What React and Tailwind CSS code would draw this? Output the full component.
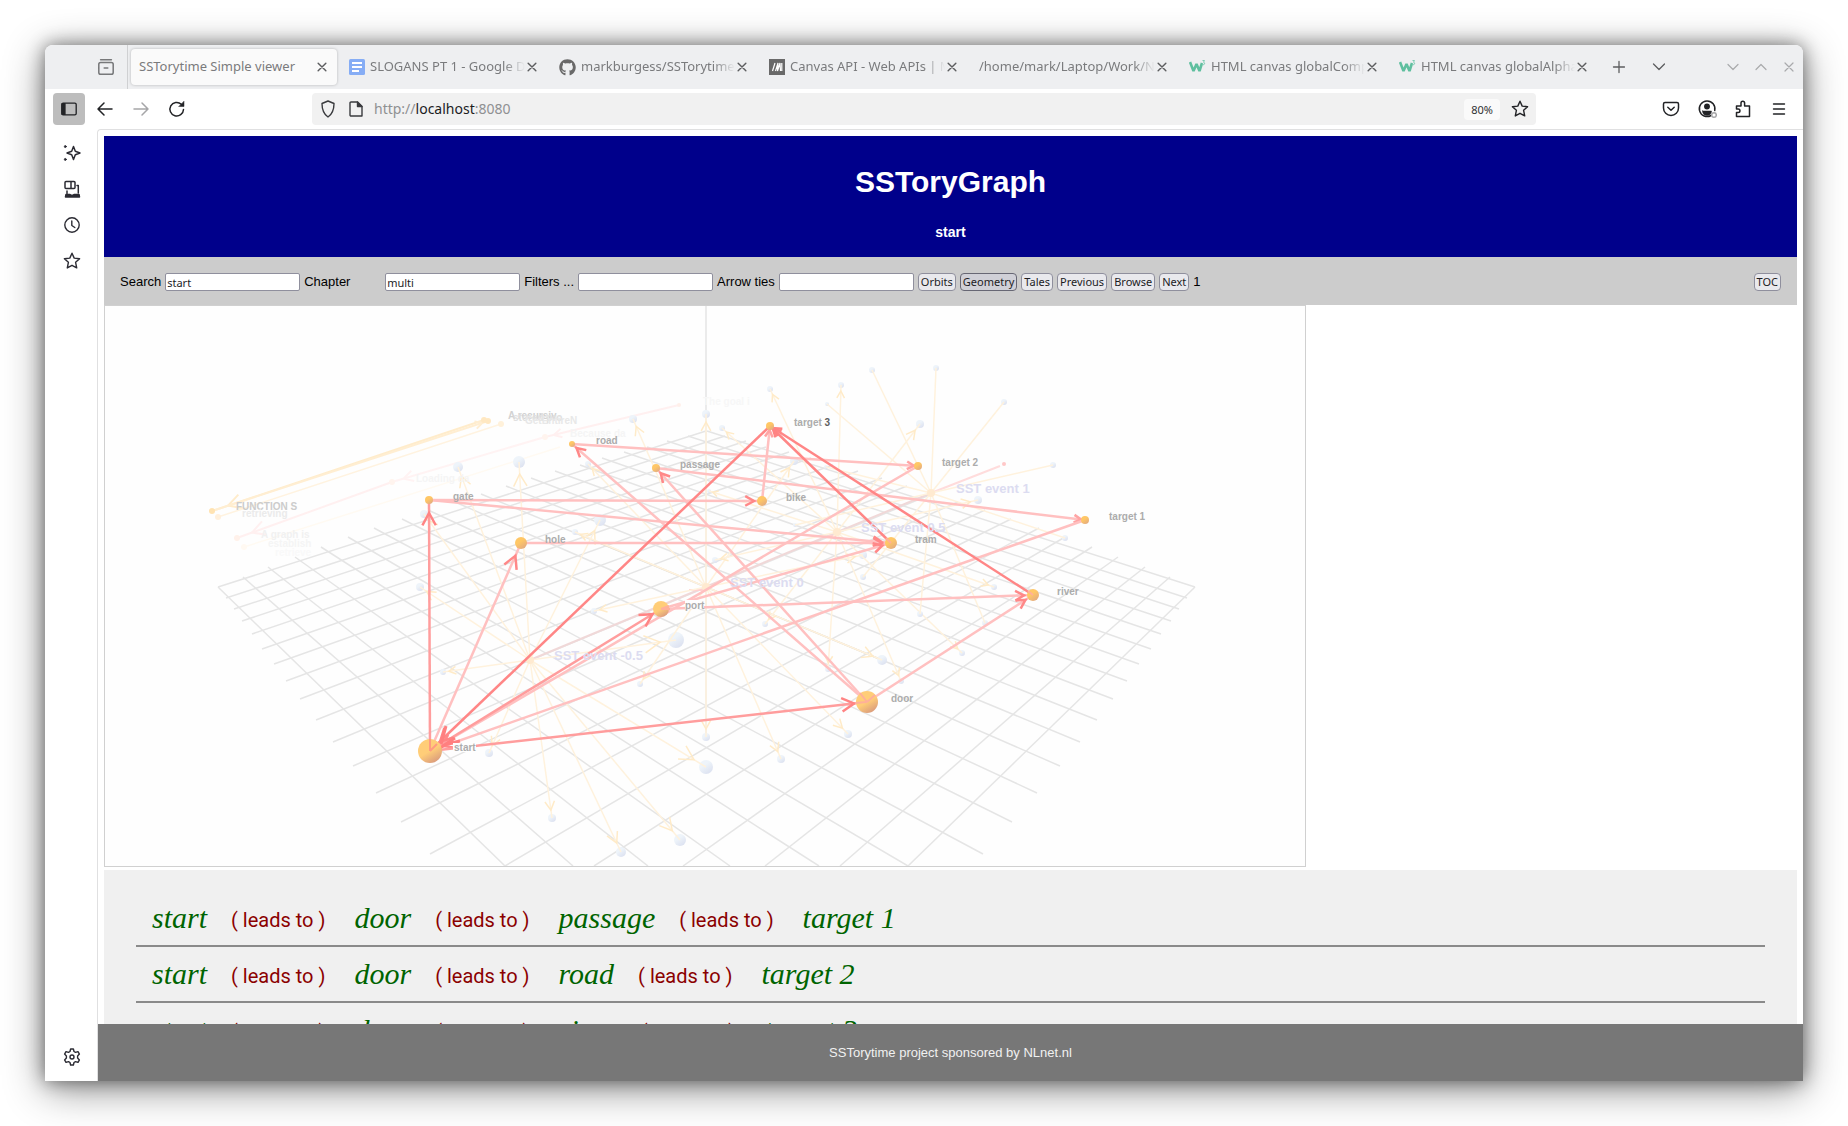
import React from "react";
import { FaGithub } from "react-icons/fa";

/* ---------- graph data ---------- */

const NODES = {
  start: [430, 751, 12],
  door: [867, 702, 11],
  port: [661, 609, 8],
  river: [1033, 595, 6],
  tram: [891, 543, 6],
  hole: [521, 543, 6],
  bike: [762, 501, 5],
  gate: [429, 500, 4],
  passage: [656, 468, 4],
  "target 1": [1085, 520, 4],
  "target 2": [918, 466, 4],
  road: [572, 444, 3],
  "target 3": [770, 426, 4],
};

const STEPS = [
  ["start", "hole"],
  ["gate", "bike"],
  ["gate", "tram"],
  ["hole", "tram"],
  ["port", "tram"],
  ["port", "river"],
  ["door", "passage"],
  ["door", "road"],
  ["door", "river"],
  ["passage", "target 1"],
  ["road", "target 2"],
  ["bike", "target 3"],
  ["target 2", "start"],
  ["target 1", "start"],
];

const STRONG_STEPS = [
  ["start", "gate"],
  ["start", "port"],
  ["start", "door"],
  ["tram", "target 3"],
  ["river", "target 3"],
  ["target 3", "start"],
];

const HUBS = [
  {
    label: "SST event -0.5",
    at: [530, 660],
    text: [554, 660],
    leaves: [
      [458, 467, 5], [519, 462, 6], [424, 514, 4], [600, 520, 6], [420, 587, 4], [443, 672, 3],
      [489, 753, 4], [552, 818, 4], [621, 852, 5], [680, 840, 6], [706, 767, 7], [676, 640, 8],
    ],
  },
  {
    label: "SST event 0",
    at: [706, 587],
    text: [730, 587],
    leaves: [
      [706, 414, 4], [633, 419, 4], [588, 464, 3], [575, 532, 3], [594, 611, 3], [640, 684, 3],
      [706, 737, 4], [781, 759, 4], [848, 734, 4], [882, 660, 5], [794, 461, 4], [863, 555, 4],
    ],
  },
  {
    label: "SST event 0.5",
    at: [837, 532],
    text: [861, 532],
    leaves: [
      [722, 428, 3], [770, 389, 3], [841, 385, 3], [920, 424, 4], [978, 500, 4], [994, 587, 3],
      [962, 653, 3], [901, 681, 3], [828, 669, 3], [765, 624, 3], [715, 560, 3], [709, 491, 2],
    ],
  },
  {
    label: "SST event 1",
    at: [931, 493],
    text: [956, 493],
    plain: true,
    leaves: [
      [827, 404, 2], [872, 370, 3], [936, 368, 3], [1004, 402, 3], [1053, 465, 3], [1065, 538, 3],
      [985, 623, 3], [920, 614, 3], [863, 577, 3], [795, 525, 2], [826, 467, 2],
    ],
  },
];

const UPPER = [
  [218, 587], [243, 577], [268, 567], [295, 557], [321, 547], [348, 537], [374, 528],
  [402, 519], [428, 510], [455, 502], [481, 494], [506, 486], [531, 478], [555, 471],
  [580, 465], [602, 458], [624, 452], [647, 447], [667, 441], [688, 436], [707, 431],
];
const LOWER = [
  [218, 587], [226, 598], [234, 609], [242, 621], [252, 634], [262, 649], [274, 664],
  [286, 681], [300, 699], [316, 720], [333, 742], [353, 766], [376, 793], [401, 822], [430, 854],
  [505, 866], [594, 866], [683, 866], [765, 866], [840, 866], [908, 866],
];
/* the floor is symmetric about the vertical axis: x and MIRROR - x are twins */
const MIRROR = 1413;

const FAINT_TEXT = [
  ["A recursiv", 508, 419, "#d2d2d2"],
  ["stored pro", 513, 421, "#e0e0e0"],
  ["GetEntireN", 525, 424, "#e8e8e8"],
  ["Because da", 570, 437, "#f5f5f5"],
  ["Loading da", 416, 482, "#f5f5f5"],
  ["FUNCTION S", 236, 510, "#cccccc"],
  ["retrieving", 242, 517, "#ebebeb"],
  ["A graph is", 261, 538, "#f1f1f1"],
  ["establish", 268, 547, "#f5f5f5"],
  ["retrieve", 275, 556, "#f9f9f9"],
  ["The goal i", 703, 405, "#f7f7f7"],
];

function headPath(from, to, back, len) {
  const a = Math.atan2(to[1] - from[1], to[0] - from[0]);
  const tx = to[0] - back * Math.cos(a);
  const ty = to[1] - back * Math.sin(a);
  const wing = (d) => `${tx - len * Math.cos(a + d)} ${ty - len * Math.sin(a + d)}`;
  return `M${wing(0.5)}L${tx} ${ty}L${wing(-0.5)}`;
}

function Arrow({ from, to, back, len, color, width, headColor }) {
  return (
    <g fill="none" strokeWidth={width}>
      <path d={`M${from[0]} ${from[1]}L${to[0]} ${to[1]}`} stroke={color} />
      {len > 0 && <path d={headPath(from, to, back, len)} stroke={headColor || color} />}
    </g>
  );
}

function Graph() {
  return (
    <svg viewBox="105 306 1200 560" className="block w-full" role="img" aria-label="Story graph">
      <defs>
        <linearGradient id="ball" x1="0.3" y1="0.1" x2="0.8" y2="0.95">
          <stop offset="0.45" stopColor="#ffcd78" />
          <stop offset="1" stopColor="#d99a7c" />
        </linearGradient>
        <linearGradient id="smallball" x1="0.2" y1="0.1" x2="0.8" y2="0.95">
          <stop offset="0.35" stopColor="#ffc766" />
          <stop offset="1" stopColor="#e3ab80" />
        </linearGradient>
        <linearGradient id="leaf" x1="0.2" y1="0.1" x2="0.8" y2="0.95">
          <stop offset="0.3" stopColor="#eef4fa" />
          <stop offset="1" stopColor="#dce1f0" />
        </linearGradient>
      </defs>

      {/* floor grid */}
      <g stroke="#e5e5e5" strokeWidth="1.5">
        {LOWER.map(([x, y], k) => {
          const [ux, uy] = UPPER[20 - k];
          return (
            <g key={k}>
              <line x1={x} y1={y} x2={MIRROR - ux} y2={uy} />
              <line x1={MIRROR - x} y1={y} x2={ux} y2={uy} />
            </g>
          );
        })}
      </g>

      {/* axes */}
      <line x1="706" y1="306" x2="706" y2="737" stroke="#e4e4e4" strokeWidth="1.5" />
      <line x1="600" y1="543" x2="882" y2="660" stroke="#e2dcd0" strokeWidth="1.5" />
      <path d="M530 660L931 493" stroke="#f0d8d8" strokeWidth="2" fill="none" />
      <path d="M931 493L1000 466" stroke="#ffdcdc" strokeWidth="2" fill="none" />
      <path d="M689 590H705M828 536H837" stroke="#ffd0d0" strokeWidth="2" fill="none" />

      {/* background clusters */}
      <Arrow from={[484, 420]} to={[212, 511]} back={17} len={15} color="#ffeccb" width="2" />
      <Arrow from={[212, 511]} to={[488, 421]} back={6} len={8} color="#ffeed2" width="2" />
      <line x1="218" y1="517" x2="501" y2="424" stroke="#fff3e0" strokeWidth="1.5" />
      <line x1="244" y1="547" x2="560" y2="447" stroke="#fffaf2" strokeWidth="1.5" />
      <Arrow from={[392, 482]} to={[237, 538]} back={16} len={15} color="#fff0f0" width="2" />
      <Arrow from={[545, 437]} to={[392, 482]} back={12} len={11} color="#fff3f3" width="2" />
      <Arrow from={[679, 405]} to={[545, 437]} back={9} len={9} color="#fff0f0" width="2" />
      <circle cx="212" cy="511" r="3" fill="#ffe3b2" />
      <circle cx="218" cy="517" r="3" fill="#fff0dc" />
      <circle cx="484" cy="420" r="3" fill="#ffe8c2" />
      <circle cx="488" cy="421" r="3" fill="#ffe8c2" />
      <circle cx="501" cy="424" r="3" fill="#fff1da" />
      <circle cx="237" cy="538" r="3" fill="#fff1ea" />
      <circle cx="244" cy="547" r="3" fill="#fff9f2" />
      <circle cx="392" cy="482" r="3" fill="#fff4ee" />
      <circle cx="545" cy="437" r="3" fill="#fff4ee" />
      <circle cx="679" cy="405" r="2" fill="#fff0ea" />

      {/* event hubs with their spokes */}
      {HUBS.map((h) => (
        <g key={h.label}>
          {h.leaves.map(([x, y, r]) => (
            <circle key={`${x}-${y}`} cx={x} cy={y} r={r} fill="url(#leaf)" />
          ))}
          {h.leaves.map(([x, y, r]) => (
            <Arrow
              key={`${x}-${y}`}
              from={h.at}
              to={[x, y]}
              back={r * 2}
              len={h.plain ? 0 : r * 2 + 2}
              color="#fff2dd"
              headColor="#ffebc8"
              width="1.5"
            />
          ))}
          <circle cx={h.at[0]} cy={h.at[1]} r="4" fill="#ffead0" />
        </g>
      ))}
      <circle cx="1004" cy="464" r="2" fill="#ffc8c8" />

      {/* story paths */}
      {STEPS.map(([a, b]) => (
        <Arrow
          key={a + b}
          from={NODES[a]}
          to={NODES[b]}
          back={NODES[b][2] + (b.startsWith("target") ? 0 : b === "hole" ? 8 : 3)}
          len={b.startsWith("target") ? 8 : b === "hole" ? 14 : 10}
          color="#ffc0c0"
          headColor={b.startsWith("target") ? "#ffa4a4" : "#ff8888"}
          width="2.5"
        />
      ))}
      {STRONG_STEPS.map(([a, b]) => (
        <Arrow
          key={a + b}
          from={NODES[a]}
          to={NODES[b]}
          back={b.startsWith("target") ? 4 : b === "gate" ? 13 : NODES[b][2] + 2}
          len={b.startsWith("target") ? 9 : 14}
          color={b === "gate" || b === "port" || b === "door" ? "#ff9d9d" : "#ff8686"}
          headColor="#ff8484"
          width="2.5"
        />
      ))}
      <path d="M446 726L441 744M455 738L440 748M460 741L444 745" stroke="#ff7f7f" strokeWidth="3" fill="none" />

      {Object.entries(NODES).map(([name, [x, y, r]]) => (
        <circle key={name} cx={x} cy={y} r={r} fill={r > 7 ? "url(#ball)" : "url(#smallball)"} />
      ))}
      <g stroke="#ffb09a" strokeWidth="2" fill="none">
        <path d="M430 751V739M430 751L437 744" stroke="#ff9b80" />
        <path d="M867 702L855 703M867 702L860 693M867 702L875 695" />
        <path d="M661 609H670M661 609L669 606" />
        <path d="M891 543L886 538M1033 595L1028 591" />
      </g>

      {/* labels */}
      <rect x="453" y="743" width="23" height="9" fill="#fefefe" />
      <rect x="685" y="600" width="19" height="9" fill="#fefefe" />
      <g fontFamily="Liberation Sans, Arial, sans-serif" fontWeight="700">
        <g fontSize="13" fill="#dcdcf1">
          {HUBS.map((h) => (
            <text key={h.label} x={h.text[0]} y={h.text[1]}>{h.label}</text>
          ))}
        </g>
        <g fontSize="10">
          {FAINT_TEXT.map(([t, x, y, c]) => (
            <text key={t} x={x} y={y} fill={c}>{t}</text>
          ))}
          {Object.entries(NODES).map(([name, [x, y]]) => (
            <text key={name} x={x + 24} y={y} fill="#acacac">
              {name === "target 3" ? <>target <tspan fill="#5f5f5f">3</tspan></> : name}
            </text>
          ))}
        </g>
      </g>
    </svg>
  );
}

/* ---------- icons ---------- */

function Icon({ size = 20, width = 1.5, className = "", children }) {
  return (
    <svg
      width={size}
      height={size}
      viewBox="0 0 20 20"
      fill="none"
      stroke="currentColor"
      strokeWidth={width}
      strokeLinecap="round"
      strokeLinejoin="round"
      className={`shrink-0 ${className}`}
      aria-hidden="true"
    >
      {children}
    </svg>
  );
}

const STAR = "M10 2.200l2.200 4.900 5.400.6-4 3.600 1.100 5.600L10 14.300l-4.700 2.600 1.100-5.600-4-3.600 5.400-.6z";

function W3Icon() {
  return (
    <svg width="17" height="16" viewBox="0 0 17 16" className="shrink-0" aria-hidden="true">
      <path d="M1 3l3.500 9L7.500 5l3 7L13 4" fill="none" stroke="#5fbf9f" strokeWidth="2.600" strokeLinejoin="bevel" />
      <path d="M13.500 1.500h2l-1 1.800q1.500.2 1.200 1.600-.6 1.300-2.200.6" fill="none" stroke="#7fcdb3" strokeWidth="1" />
    </svg>
  );
}

function DocsIcon() {
  return (
    <svg width="16" height="16" viewBox="0 0 16 16" className="shrink-0" aria-hidden="true">
      <rect width="16" height="16" rx="1.500" fill="#86adf5" />
      <path d="M3 4h10M3 8h10M3 12h7" stroke="#fff" strokeWidth="1.800" />
    </svg>
  );
}

function MdnIcon() {
  return (
    <svg width="16" height="16" viewBox="0 0 16 16" className="shrink-0" aria-hidden="true">
      <rect width="16" height="16" fill="#696969" />
      <path d="M3.500 12L6 4M6.500 12L9 4l-.5 8L11 4l.5 8M12.800 4v8" stroke="#fff" strokeWidth="1.200" fill="none" />
    </svg>
  );
}

/* ---------- browser chrome ---------- */

const TABS = [
  { title: "SSTorytime Simple viewer", active: true },
  { title: "SLOGANS PT 1 - Google Docs", icon: <DocsIcon /> },
  { title: "markburgess/SSTorytime", icon: <FaGithub size={17} className="shrink-0 text-[#696969]" /> },
  { title: "Canvas API - Web APIs | MDN", icon: <MdnIcon /> },
  { title: "/home/mark/Laptop/Work/NLnet" },
  { title: "HTML canvas globalComposite", icon: <W3Icon /> },
  { title: "HTML canvas globalAlpha", icon: <W3Icon /> },
];

function Tab({ title, icon, active }) {
  return (
    <div className="h-9 w-[210px] shrink pr-1">
      <div
        className={`flex h-full items-center rounded pr-1 pl-2 text-[#7a7b7d] ${
          active ? "bg-[#fafafa] shadow-[0_0_3px_rgba(0,0,0,0.25)]" : ""
        }`}
      >
        <button
          className={`flex min-w-0 flex-1 items-center gap-[5px] overflow-hidden text-left text-[13px] whitespace-nowrap ${
            active ? "" : "-mr-1 [mask-image:linear-gradient(to_right,#000_88%,transparent)]"
          }`}
        >
          {icon}
          <span>{title}</span>
        </button>
        <button aria-label={`Close ${title}`} className="shrink-0">
          <Icon size={22} width={1.300} className="text-[#5c5d5f]"><path d="M6.500 6.500l7 7M13.500 6.500l-7 7" /></Icon>
        </button>
      </div>
    </div>
  );
}

function TabBar() {
  return (
    <div className="flex h-11 shrink-0 items-center bg-[#eeeff1]">
      <div className="flex h-full w-[83px] shrink-0 items-center justify-end border-r border-[#cfd0d2] pr-3">
        <button aria-label="Recent browsing">
          <Icon size={18} className="text-[#77787a]" width={1.700}>
            <path d="M4 2h12M4 5h12a2 2 0 0 1 2 2v9a2 2 0 0 1-2 2H4a2 2 0 0 1-2-2V7a2 2 0 0 1 2-2zM8 11h4" />
          </Icon>
        </button>
      </div>
      <div className="ml-[3px] flex min-w-0">
        {TABS.map((t) => <Tab key={t.title} {...t} />)}
      </div>
      <button aria-label="New tab" className="ml-2 text-[#5c5d5f]"><Icon width={1.300}><path d="M10 4.500v11M4.500 10h11" /></Icon></button>
      <button aria-label="List all tabs" className="ml-5 text-[#5c5d5f]"><Icon width={1.300}><path d="M4.500 7l5.500 5.500L15.500 7" /></Icon></button>
      <div className="mr-1 ml-auto flex gap-2 text-[#a9aaac]">
        <button aria-label="Minimize"><Icon width={1.200}><path d="M5 7.500l5 5 5-5" /></Icon></button>
        <button aria-label="Maximize"><Icon width={1.200}><path d="M5 12.500l5-5 5 5" /></Icon></button>
        <button aria-label="Close window"><Icon width={1.200}><path d="M6 6l8 8M14 6l-8 8" /></Icon></button>
      </div>
    </div>
  );
}

function NavBar() {
  return (
    <div className="flex h-10 shrink-0 items-center bg-white px-2 text-[#222326]">
      <button aria-label="Sidebar" className="flex size-8 items-center justify-center rounded bg-[#bdbdbd]">
        <Icon size={18}>
          <rect x="2" y="3.500" width="16" height="13" rx="1.500" />
          <path d="M2.500 4h3v12h-3z" fill="currentColor" />
        </Icon>
      </button>
      <button aria-label="Back" className="ml-2.5"><Icon><path d="M17 10H3.500M9 4l-6 6 6 6" /></Icon></button>
      <button aria-label="Forward" className="ml-4 text-[#a6a6a8]"><Icon><path d="M3 10h13.500M11 4l6 6-6 6" /></Icon></button>
      <button aria-label="Reload" className="ml-4">
        <Icon>
          <path d="M16.500 10.500a6.800 6.800 0 1 1-2.200-5.300" />
          <path d="M17 2.500v5h-5z" fill="currentColor" strokeWidth="0.500" />
        </Icon>
      </button>
      <div className="ml-[125px] flex h-8 min-w-0 flex-1 items-center rounded bg-[#f1f1f1] px-1.5">
        <Icon className="text-[#3a3b3e]" width={1.400}><path d="M10 2l6 2.500c0 6-1.500 10.500-6 13.500-4.500-3-6-7.500-6-13.500z" /></Icon>
        <Icon className="ml-2 text-[#3a3b3e]" width={1.400}>
          <path d="M5 3h6.500L16 7.500V17H5a1 1 0 0 1-1-1V4a1 1 0 0 1 1-1z" />
          <path d="M11.500 3L16 7.500h-4.500z" fill="currentColor" />
        </Icon>
        <p className="ml-2 flex-1 text-sm text-[#8f9092]">http://<span className="text-[#1c1c1f]">localhost</span>:8080</p>
        <button className="rounded bg-[#fafafa] px-[7px] text-[11px] leading-[21px] text-[#303133]">80%</button>
        <button aria-label="Bookmark" className="ml-2.5"><Icon width={1.400}><path d={STAR} /></Icon></button>
      </div>
      <div className="ml-[125px] flex items-center gap-4 pr-1.5">
        <button aria-label="Pocket"><Icon><path d="M4 3.500h12a1.500 1.500 0 0 1 1.500 1.500v4a7.500 7.500 0 0 1-15 0V5A1.500 1.500 0 0 1 4 3.500zM6.800 8.200L10 11.200l3.200-3" /></Icon></button>
        <button aria-label="Account">
          <Icon>
            <path d="M14 16.500a7.800 7.800 0 1 1 3.700-5" />
            <circle cx="10" cy="7.500" r="2.200" fill="currentColor" />
            <path d="M5.500 12h9c0 3-2 4.500-4.500 4.500S5.500 15 5.500 12z" fill="currentColor" strokeWidth="0.500" />
            <circle cx="17" cy="16" r="2.300" stroke="#a6a6a8" fill="#fff" />
          </Icon>
        </button>
        <button aria-label="Extensions">
          <Icon><path d="M3.500 17.500v-4h1.700a1.700 1.700 0 0 0 0-3.500H3.500V7H8V4a1.800 1.800 0 0 1 3.600 0v3H16.500v10.500z" /></Icon>
        </button>
        <button aria-label="Menu"><Icon width={1.400}><path d="M4.500 5h11M4.500 10h11M4.500 15h11" /></Icon></button>
      </div>
    </div>
  );
}

function Sidebar() {
  return (
    <nav className="flex w-[52px] shrink-0 flex-col items-center bg-white py-3.5 pl-0.5 text-[#2b2b33]">
      <div className="flex flex-col gap-4">
        <button aria-label="AI chatbot">
          <Icon>
            <path d="M11.500 3.500l1.800 4.700 4.700 1.800-4.700 1.800-1.800 4.700-1.800-4.700L5 10l4.700-1.800z" />
            <circle cx="3.300" cy="3.600" r="1" fill="currentColor" strokeWidth="0.800" />
            <circle cx="3.300" cy="16.400" r="1" fill="currentColor" strokeWidth="0.800" />
          </Icon>
        </button>
        <button aria-label="Synced tabs">
          <Icon>
            <path d="M4 2.500h8a1 1 0 0 1 1 1v5a1 1 0 0 1-1 1H4a1 1 0 0 1-1-1v-5a1 1 0 0 1 1-1zM9 2.500v7" />
            <path d="M15 6.500h1.300V14M5 12v2.500" />
            <path d="M4 15.500h4q2 1.500 4 0h5l.5 2.500H3.500z" fill="currentColor" />
          </Icon>
        </button>
        <button aria-label="History"><Icon width={1.400}><circle cx="10" cy="10" r="7.200" /><path d="M9.800 6v4.500l3 2" /></Icon></button>
        <button aria-label="Bookmarks"><Icon width={1.400}><path d={STAR} /></Icon></button>
      </div>
      <button aria-label="Customize sidebar" className="mt-auto">
        <Icon width={1.400}>
          <path d="M8.600 2h2.800l.6 2.500 1.500.9 2.500-.8 1.400 2.500-1.800 1.800v2.200l1.800 1.800-1.400 2.500-2.500-.8-1.500.9-.6 2.500H8.600L8 15.500l-1.500-.9-2.500.8-1.400-2.500 1.800-1.800V8.900L2.600 7.100 4 4.600l2.500.8L8 4.500z" />
          <circle cx="10" cy="10" r="2" />
        </Icon>
      </button>
    </nav>
  );
}

/* ---------- page ---------- */

function Field({ label, value, labelClass = "" }) {
  const id = `field-${label.toLowerCase().replace(/[^a-z]/g, "")}`;
  return (
    <div className="flex items-center gap-1">
      <label htmlFor={id} className={`whitespace-nowrap ${labelClass}`}>{label}</label>
      <input
        id={id}
        defaultValue={value}
        className="h-[18px] w-[135px] rounded-[2px] border border-[#8f8f9d] bg-white px-px font-['Noto_Sans'] text-[11px] text-[#1c1c1f]"
      />
    </div>
  );
}

function PageButton({ children, active }) {
  return (
    <button
      type="button"
      className={`h-[18px] rounded border px-0.5 font-['Noto_Sans'] text-[11px] leading-4 text-[#1c1c1f] ${
        active ? "border-[#676774] bg-[#d0d0d7]" : "border-[#8f8f9d] bg-[#e9e9ed]"
      }`}
    >
      {children}
    </button>
  );
}

const STORIES = [
  ["start", "door", "passage", "target 1"],
  ["start", "door", "road", "target 2"],
  ["start", "door", "river", "target 3"],
];

function Story({ steps }) {
  return (
    <div className="flex h-[54px] items-center gap-6 pl-4 whitespace-nowrap">
      {steps.map((s, i) => (
        <React.Fragment key={s}>
          {i > 0 && <span className="pt-1 pr-[5px] font-[Roboto] text-xl text-[#8b0000]">( leads to )</span>}
          <a href="#story" className="font-['Liberation_Serif'] text-3xl text-[#006400] italic">{s}</a>
        </React.Fragment>
      ))}
    </div>
  );
}

export default function App() {
  return (
    <div className="h-screen bg-white p-[45px] font-['Noto_Sans',sans-serif]">
      <div className="flex h-full flex-col overflow-hidden rounded-t-lg bg-white shadow-[0_8px_40px_rgba(0,0,0,0.45),0_0_18px_rgba(0,0,0,0.45)]">
        <TabBar />
        <NavBar />
        <div className="flex min-h-0 flex-1">
          <Sidebar />
          <div className="flex min-w-0 flex-1 flex-col rounded-tl-sm border-t border-l border-[#e0e0e1] font-['Liberation_Sans',Arial,sans-serif]">
            <main className="min-h-0 flex-1 overflow-hidden px-1.5 pt-1.5">
              <header className="bg-[#00008b] pt-7 pb-[14px] text-center font-bold text-white">
                <h1 className="text-3xl leading-[36px]">SSToryGraph</h1>
                <h2 className="mt-[22px] text-sm leading-[21px]">start</h2>
              </header>
              <form className="flex h-12 items-center gap-1 bg-[#cccccc] px-4 pt-0.5 text-[13px] text-black" onSubmit={(e) => e.preventDefault()}>
                <Field label="Search" value="start" />
                <Field label="Chapter" value="multi" labelClass="w-[77px]" />
                <Field label="Filters ..." value="" />
                <Field label="Arrow ties" value="" />
                <PageButton>Orbits</PageButton>
                <PageButton active>Geometry</PageButton>
                <PageButton>Tales</PageButton>
                <PageButton>Previous</PageButton>
                <PageButton>Browse</PageButton>
                <PageButton>Next</PageButton>
                <span>1</span>
                <span className="ml-auto flex"><PageButton>TOC</PageButton></span>
              </form>
              <div className="w-[1202px] max-w-full border border-[#d0d0d0] bg-[#fefefe]">
                <Graph />
              </div>
              <section className="mt-[3px] bg-[#f0f0f0] px-8 pt-[21px]">
                {STORIES.map((s) => (
                  <React.Fragment key={s.join()}>
                    <Story steps={s} />
                    <hr className="border-t-2 border-[#8a8a8a]" />
                  </React.Fragment>
                ))}
              </section>
            </main>
            <footer className="flex h-[57px] shrink-0 items-center justify-center bg-[#777777] text-[13px] text-[#f1f1f1]">
              SSTorytime project sponsored by NLnet.nl
            </footer>
          </div>
        </div>
      </div>
    </div>
  );
}
